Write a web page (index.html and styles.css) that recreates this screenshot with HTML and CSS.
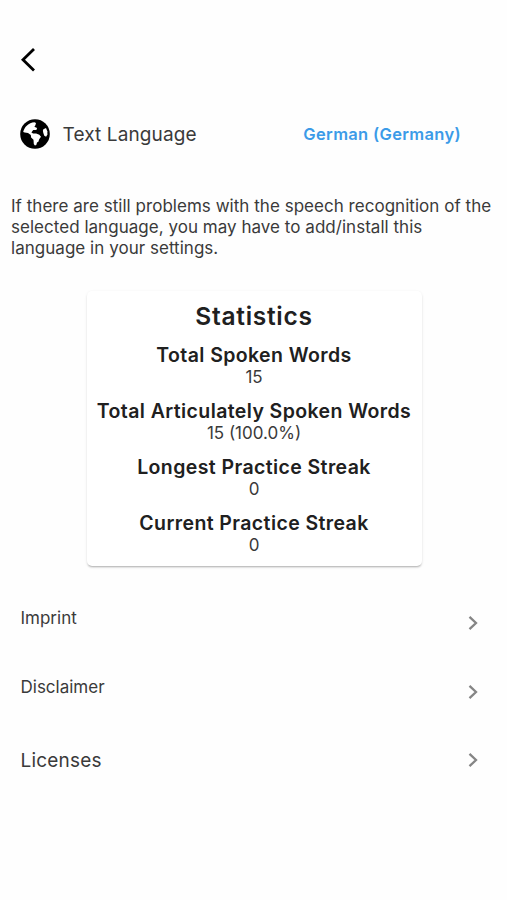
FILE: index.html
```
<!DOCTYPE html>
<html lang="en">
<head>
  <meta charset="UTF-8" />
  <meta name="viewport" content="width=device-width, initial-scale=1.0"/>
  <title>Settings</title>
  <link rel="stylesheet" href="styles.css">
</head>
<body>
  <header>
    <button class="back" aria-label="Back">
      <svg width="16" height="26" viewBox="0 0 16 26"><path d="M14 2 3 12.7 14 23.5"/></svg>
    </button>
  </header>

  <div class="language">
    <svg class="globe" width="30" height="30" viewBox="0 0 30 30">
      <circle cx="15" cy="15" r="14.8"/>
      <path d="M3.2 13C4.400 8 8.500 3.600 14.500 3.200l1.500.9-.6 2.100-1 1.500 2.700 1.200-.7 2-3.200.2-1.800 2.500 1.700 1 3-.2 3.200 1.300 1.700 2-1.800 2.500-.8 2.500-1.400.8-.7 2.500-1.400.5-1.100-1.500-.3-4.300-2.400-2.200-.3-2.500-2.800-2-3.300-.6z"/>
      <path d="M23.400 10.200l2.600-1.200 1.300 3.200.1 3.300-1.300 2.300-1.800-1-1-2.800-.4-2.300z"/>
    </svg>
    <span>Text Language</span>
    <a href="#" class="selected">German (Germany)</a>
  </div>

  <p class="hint">If there are still problems with the speech recognition of the selected language, you may have to add/install this language in your settings.</p>

  <div class="card">
    <h2>Statistics</h2>
    <h3>Total Spoken Words</h3>
    <p>15</p>
    <h3>Total Articulately Spoken Words</h3>
    <p>15 (100.0%)</p>
    <h3>Longest Practice Streak</h3>
    <p>0</p>
    <h3>Current Practice Streak</h3>
    <p>0</p>
  </div>

  <nav>
    <a href="#" class="item">
      <span>Imprint</span>
      <svg width="10" height="16" viewBox="0 0 10 16"><path d="M1.5 1.8 8 8l-6.5 6.2"/></svg>
    </a>
    <a href="#" class="item">
      <span>Disclaimer</span>
      <svg width="10" height="16" viewBox="0 0 10 16"><path d="M1.5 1.8 8 8l-6.5 6.2"/></svg>
    </a>
    <a href="#" class="item large">
      <span>Licenses</span>
      <svg width="10" height="16" viewBox="0 0 10 16"><path d="M1.5 1.8 8 8l-6.5 6.2"/></svg>
    </a>
  </nav>
</body>
</html>
```
FILE: styles.css
```
* {
  box-sizing: border-box;
}
body {
  margin: 0;
  background-color: #fefefe;
  color: #3a3a3a;
  font-family: Inter, Roboto, sans-serif;
  font-size: 17px;
  line-height: 21px;
}
h2, h3, p {
  margin: 0;
}
a {
  color: inherit;
  text-decoration: none;
}
header {
  padding: 47px 20px 0;
}
.back {
  display: block;
  padding: 0;
  border: none;
  background: none;
  cursor: pointer;
}
.back svg {
  display: block;
}
svg path {
  fill: none;
  stroke: #000;
  stroke-width: 2.8;
}
.language {
  display: flex;
  align-items: center;
  height: 30px;
  margin-top: 46px;
  padding: 0 46px 0 20px;
  font-size: 19px;
  letter-spacing: 0.12px;
}
.globe {
  margin-right: 12.5px;
}
.globe path {
  fill: #fff;
  stroke: none;
}
.selected {
  margin-left: auto;
  color: #3b9be8;
  font-size: 16.5px;
  font-weight: 600;
  letter-spacing: 0.33px;
}
.hint {
  margin-top: 47px;
  padding: 0 11px;
  letter-spacing: 0.03px;
}
.card {
  width: 335px;
  height: 275px;
  margin: 32px 0 0 86.5px;
  padding-top: 10px;
  border-radius: 5px;
  background-color: #fff;
  box-shadow: 0 2px 2px -1px rgba(0, 0, 0, 0.25), 0 1px 3px rgba(0, 0, 0, 0.1);
  text-align: center;
}
.card h2 {
  margin-bottom: 12px;
  color: #202020;
  font-size: 24.5px;
  font-weight: 600;
  line-height: 30px;
  letter-spacing: 0.72px;
}
.card h3 {
  color: #202020;
  font-size: 19.5px;
  font-weight: 600;
  line-height: 24px;
  letter-spacing: 0.4px;
  white-space: nowrap;
}
.card p {
  margin-bottom: 12px;
  line-height: 20px;
}
nav {
  margin-top: 23px;
}
.item {
  display: flex;
  align-items: center;
  justify-content: space-between;
  height: 68.5px;
  padding: 0 29px 0 20.5px;
}
.item span {
  margin-top: -9px;
}
.item.large span {
  margin-top: 0;
  font-size: 19px;
  letter-spacing: 0.2px;
}
.item path {
  stroke: #858585;
  stroke-width: 2.3;
}
```
